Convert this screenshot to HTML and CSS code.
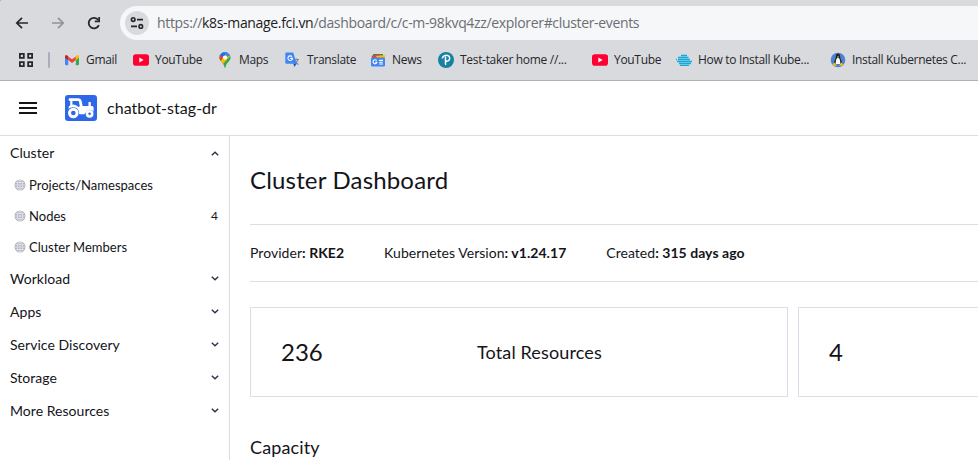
FILE: index.html
```html
<!DOCTYPE html>
<html lang="en">
<head>
<meta charset="utf-8">
<title>Cluster Dashboard</title>
<link rel="stylesheet" href="styles.css">
</head>
<body>
<svg class="defs" width="0" height="0" aria-hidden="true">
  <symbol id="globe" viewBox="0 0 12 12"><circle cx="6" cy="6" r="5.5" fill="#b4b5c2"/><path d="M6 1v10M1 6h10M2 3.5h8M2 8.5h8" stroke="#e9e9f0" stroke-width=".7"/><ellipse cx="6" cy="6" rx="2.6" ry="5" fill="none" stroke="#e9e9f0" stroke-width=".7"/></symbol>
  <symbol id="chevron" viewBox="0 0 8 5"><path d="M.8 .8 4 3.8 7.2 .8" fill="none" stroke="#27344a" stroke-width="1.4"/></symbol>
  <symbol id="youtube" viewBox="0 0 16 16"><rect y="2.3" width="16" height="11.4" rx="2.8" fill="#ff0033"/><path d="M6.3 5.6v4.8L10.6 8z" fill="#fff"/></symbol>
</svg>
<header class="browser">
  <div class="toolbar">
    <svg class="nav-icon" viewBox="0 0 16 16"><path d="M14 8H3M8 2.8 2.8 8 8 13.2" fill="none" stroke="#26272a" stroke-width="1.7"/></svg>
    <svg class="nav-icon" viewBox="0 0 16 16"><path d="M2 8h11M8 2.8 13.2 8 8 13.2" fill="none" stroke="#929397" stroke-width="1.7"/></svg>
    <svg class="nav-icon" viewBox="0 0 16 16"><path d="M12.9 10.2A5.3 5.3 0 1 1 12.3 5" fill="none" stroke="#26272a" stroke-width="1.8"/><path d="M14 2v5.2H8.8V5.5h3.5V2z" fill="#26272a"/></svg>
    <div class="address">
      <span class="site-info"><svg width="14" height="14" viewBox="0 0 14 14" fill="none" stroke="#26272a" stroke-width="1.6"><circle cx="3.2" cy="3.6" r="1.8"/><path d="M7 3.6h6M1 10.4h6"/><circle cx="10.8" cy="10.4" r="1.8"/></svg></span>
      <span class="url">https://<b>k8s-manage.fci.vn</b>/dashboard/c/c-m-98kvq4zz/explorer#cluster-events</span>
    </div>
  </div>
  <nav class="bookmarks">
    <svg class="apps-icon" viewBox="0 0 14 14" fill="none" stroke="#26272a" stroke-width="1.8"><path d="M.9.9h3.9v3.9H.9zM9.2.9h3.9v3.9H9.2zM.9 9.2h3.9v3.9H.9zM9.2 9.2h3.9v3.9H9.2z"/></svg>
    <span class="divider"></span>
    <a class="bookmark"><svg viewBox="0 0 16 16"><path d="M1 4.5V12q0 1.2 1.2 1.2h2V6.500z" fill="#4285f4"/><path d="M15 4.500V12q0 1.200-1.200 1.200h-2V6.500z" fill="#34a853"/><path d="M4.200 8.100V4.400L8 7.200l3.800-2.800v3.700L8 11z" fill="#ea4335"/><path d="M11.800 8.100V4.300l.8-.8Q15 2 15 4.500v1.200z" fill="#fbbc04"/><path d="M4.200 8.100V4.300l-.8-.8Q1 2 1 4.500v1.200z" fill="#c5221f"/></svg>Gmail</a>
    <a class="bookmark"><svg><use href="#youtube"/></svg>YouTube</a>
    <a class="bookmark"><svg viewBox="0 0 16 16"><clipPath id="pin"><path d="M8 0a5.600 5.600 0 0 1 5.600 5.600c0 3.800-4.400 5-5 9.700q-.6 1-1.200 0C6.800 10.600 2.400 9.400 2.400 5.600A5.600 5.600 0 0 1 8 0z"/></clipPath><g clip-path="url(#pin)"><path d="M0 0h16v16H0z" fill="#34a853"/><path d="M3 0 10.500 0 5.500 6 2 3.500z" fill="#1a73e8"/><path d="M2 2.500 7 5.500 3 9.500 1 8z" fill="#ea4335"/><path d="M3 9.500 11.500 0 14 3 6 12z" fill="#fbbc04"/><path d="M7 0h7v3L10 5z" fill="#4285f4"/></g><circle cx="8" cy="5.600" r="2.100" fill="#fff"/></svg>Maps</a>
    <a class="bookmark"><svg viewBox="0 0 16 16"><path d="M6 4h8q1.500 0 1.500 1.500v8.500q0 1.200-1.500 1.200H9z" fill="#dadce0"/><path d="M9 7.500h5M11.500 6.500v1M13 7.500q-1 3-3.500 4.500M10 9q1.500 2.500 3.500 3.500" fill="none" stroke="#7b8794" stroke-width="1.200"/><path d="M1.500.500h6.800l3.400 11.300H1.500Q.300 11.800.300 10.600V1.700Q.300.500 1.500.500z" fill="#4285f4"/><path d="M8.300 11.800h3.400L9.400 15z" fill="#1a57c5"/><path d="M6.900 4.600A2.300 2.300 0 1 0 7.500 6.400H5.200" fill="none" stroke="#fff" stroke-width="1.100"/></svg>Translate</a>
    <a class="bookmark"><svg viewBox="0 0 16 16"><path d="M3 2h10v5H3z" fill="#0c9d58"/><path d="m1.500 3.700 9-1.700 1 4-9 2z" fill="#ea4335"/><path d="m6 4 8.500-1 .800 3.500-8 1z" fill="#fbbc04"/><rect x="1" y="5.500" width="14" height="9" rx="1.200" fill="#4285f4"/><path d="M6.700 8.600A2 2 0 1 0 7 10.200H5.200M9.200 8.400H13M9.200 10.200h3.500M9.200 12H13" fill="none" stroke="#fff" stroke-width="1.100"/></svg>News</a>
    <a class="bookmark"><svg viewBox="0 0 16 16"><circle cx="8" cy="8" r="8" fill="#1581a3"/><path d="M4.300 6.500C4.800 3.500 8 3 9.500 3.400c2.600.500 3 4.200.700 5.400-1.400.700-2.700.200-2.700-.600M7.500 4.500v7.200q0 .800.800.800" fill="none" stroke="#fff" stroke-width="1.500"/></svg>Test-taker home //...</a>
    <a class="bookmark"><svg><use href="#youtube"/></svg>YouTube</a>
    <a class="bookmark"><svg viewBox="0 0 16 16"><path d="M5 3.500h6M2 5.500h10.500M0 7.500h1M2 7.500h12M1 9.500h15M3 11.500h12M4 13.400h9" stroke="#12a9df" stroke-width="1.300"/></svg>How to Install Kube...</a>
    <a class="bookmark"><svg viewBox="0 0 16 16"><circle cx="8" cy="8" r="7.300" fill="#4b82d4"/><path d="M8 1.500C5.500 1.500 6 5 5.500 6.500 5 8 3.800 9.500 4 12h8c.200-2.500-1-4-1.500-5.500C10 5 10.500 1.500 8 1.500z" fill="#202326"/><path d="M8 5.500c-1.500 0-2.500 4-2.300 6.500h4.600C10.500 9.500 9.500 5.500 8 5.500z" fill="#fff"/><path d="m7 4.200 1 1.300 1-1.300z" fill="#f4c20d"/><path d="m2.800 12 2-1.500 2 3.300H3zM13.200 12l-2-1.500-2 3.300H13z" fill="#f4c20d"/></svg>Install Kubernetes C...</a>
  </nav>
</header>
<div class="app-header">
  <span class="menu-icon"><i></i><i></i><i></i></span>
  <svg class="logo" viewBox="0 0 32 26"><rect width="32" height="26" rx="3" fill="#2e68e9"/><g fill="none" stroke="#fff"><path d="M5 4.700h8.500q1.500 0 1.800 1.500l1 5.500" stroke-width="2.800" stroke-linecap="round"/><path d="M6.300 5v5.500" stroke-width="2.200"/><circle cx="8.300" cy="18" r="3.800" stroke-width="3"/><circle cx="24.600" cy="18.800" r="2.600" stroke-width="2.600"/></g><path d="M4 11q5-3.500 9.500 1l2-1h8V7h2.300v4H27q1.600 0 1.600 1.500v4q-4-3.800-7.500.500l-1.600 2.300h-5.200Q14 12 8 12.200q-3 0-4.600 1.500z" fill="#fff"/></svg>
  <span class="cluster-name">chatbot-stag-dr</span>
</div>
<div class="body">
  <aside class="sidebar">
    <div class="group first">Cluster<svg class="chevron up"><use href="#chevron"/></svg></div>
    <div class="item"><svg class="globe"><use href="#globe"/></svg>Projects/Namespaces</div>
    <div class="item"><svg class="globe"><use href="#globe"/></svg>Nodes<span class="count">4</span></div>
    <div class="item"><svg class="globe"><use href="#globe"/></svg>Cluster Members</div>
    <div class="group">Workload<svg class="chevron"><use href="#chevron"/></svg></div>
    <div class="group">Apps<svg class="chevron"><use href="#chevron"/></svg></div>
    <div class="group">Service Discovery<svg class="chevron"><use href="#chevron"/></svg></div>
    <div class="group">Storage<svg class="chevron"><use href="#chevron"/></svg></div>
    <div class="group">More Resources<svg class="chevron"><use href="#chevron"/></svg></div>
  </aside>
  <main class="main">
    <h1>Cluster Dashboard</h1>
    <div class="glance">
      <span>Provider<b>: RKE2</b></span>
      <span>Kubernetes Version<b>: v1.24.17</b></span>
      <span>Created<b>: 315 days ago</b></span>
    </div>
    <div class="cards">
      <div class="card"><span class="number">236</span><span class="label">Total Resources</span></div>
      <div class="card open"><span class="number">4</span></div>
    </div>
    <h2>Capacity</h2>
  </main>
</div>
</body>
</html>
```
FILE: styles.css
```css
* { box-sizing: border-box; }
body {
  margin: 0;
  height: 460px;
  overflow: hidden;
  background: #fff;
  color: #141419;
  font: 14px/20px Lato, sans-serif;
}
svg { display: block; flex: none; }
.defs { position: absolute; }

/* Browser chrome */
.browser {
  height: 81px;
  background: radial-gradient(circle at 6px 6px, #d9dade 7px, #a9abb8 8px) 0 0 / 6px 6px no-repeat, linear-gradient(#d9dade, #d9dade) 6px 0 no-repeat, linear-gradient(#d9dade, #d9dade) 0 6px no-repeat;
  border-bottom: 1px solid #b0b0b8;
  font-family: "Open Sans", "Noto Sans", sans-serif;
}
.toolbar {
  display: flex;
  align-items: center;
  gap: 20px;
  height: 40px;
  padding: 6px 0 0 14px;
}
.nav-icon { width: 16px; height: 16px; }
.address {
  display: flex;
  align-items: center;
  flex: 1;
  height: 34px;
  margin-left: -2px;
  padding-left: 5px;
  background: #f6f7f9;
  border-radius: 17px 0 0 17px;
  overflow: hidden;
}
.site-info {
  display: grid;
  place-items: center;
  flex: none;
  width: 24px;
  height: 24px;
  border-radius: 50%;
  background: #d9dade;
}
.url {
  margin-left: 8px;
  font-size: 14px;
  letter-spacing: -0.335px;
  color: #6b6e73;
  white-space: nowrap;
}
.url b { font-weight: 400; color: #202124; }
.bookmarks {
  display: grid;
  grid-template-columns: 29px 16px 69px 84px 68px 85px 68px 154px 84px 154px 148px;
  align-items: center;
  height: 40px;
  padding-left: 19px;
}
.apps-icon { width: 14px; height: 14px; }
.divider { width: 2px; height: 16px; background: #a8aebd; border-radius: 1px; }
.bookmark {
  display: flex;
  align-items: center;
  gap: 6px;
  font-size: 12px;
  letter-spacing: -0.31px;
  color: #26272a;
  white-space: nowrap;
}
.bookmark svg { width: 16px; height: 16px; }

/* Application header */
.app-header {
  display: flex;
  align-items: center;
  height: 55px;
  padding-left: 19px;
  border-bottom: 1px solid #dcdee7;
}
.menu-icon { display: grid; gap: 3px; width: 18px; }
.menu-icon i { height: 2px; background: #141419; }
.logo { width: 32px; height: 26px; margin: 0 10px 0 28px; }
.cluster-name { font-size: 16px; letter-spacing: 0.04px; }

/* Navigation and content */
.body { display: flex; height: 324px; }
.sidebar {
  flex: none;
  width: 230px;
  border-right: 1px solid #dcdee7;
}
.group {
  display: flex;
  align-items: center;
  justify-content: space-between;
  height: 33px;
  padding: 0 10px;
  letter-spacing: 0.04px;
}
.group.first { padding-top: 1px; }
.chevron { width: 8px; height: 5px; }
.chevron.up { transform: scaleY(-1); }
.item {
  display: flex;
  align-items: center;
  height: 31px;
  padding: 0 11px 0 14px;
  font-size: 13px;
  letter-spacing: 0.02px;
}
.globe { width: 12px; height: 12px; margin-right: 3px; }
.count { margin-left: auto; font-size: 12px; }
.main { flex: 1; min-width: 0; padding-left: 20px; overflow: hidden; }
h1, h2 { margin: 0; font-weight: 400; }
h1 { height: 88px; font-size: 24px; line-height: 88px; letter-spacing: 0.17px; }
.glance {
  display: flex;
  align-items: center;
  gap: 40px;
  height: 58px;
  border: solid #dcdee7;
  border-width: 1px 0;
  letter-spacing: 0.04px;
}
.cards {
  display: grid;
  grid-template-columns: 538px 1fr;
  gap: 10px;
  margin-top: 25px;
}
.card {
  display: grid;
  grid-template-columns: 196px 1fr;
  align-items: center;
  height: 90px;
  padding-left: 30px;
  border: 1px solid #dcdee7;
}
.card.open { grid-template-columns: 1fr; border-right: 0; }
.number { font-size: 24px; }
.label { font-size: 18px; letter-spacing: 0.13px; }
h2 { margin-top: 40px; font-size: 18px; line-height: 20px; letter-spacing: 0.13px; }
```
